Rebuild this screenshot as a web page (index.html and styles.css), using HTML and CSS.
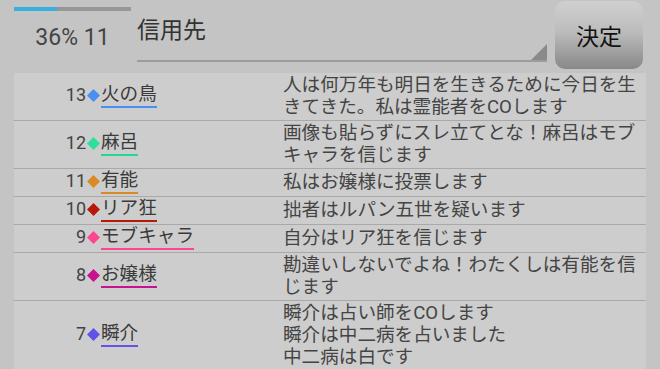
FILE: index.html
```html
<!DOCTYPE html>
<html lang="ja">
<head>
    <meta charset="UTF-8">
    <meta name="viewport" content="width=device-width, initial-scale=1.0">
    <title>投票</title>
    <link rel="stylesheet" href="styles.css">
</head>
<body>
    <div class="top">
        <div class="meter">
            <div class="bar"><div class="bar-fill"></div></div>
            <div class="stats">36% 11</div>
        </div>
        <div class="spinner">
            <span class="spinner-label">信用先</span>
            <svg class="spinner-arrow" width="16" height="16" viewBox="0 0 16 16"><polygon points="16,0 16,16 0,16" fill="#8a8a8a"/></svg>
        </div>
        <button class="btn">決定</button>
    </div>

    <div class="list">
        <div class="row">
            <div class="who">
                <span class="num">13</span>
                <svg class="mark" width="13" height="13" viewBox="0 0 13 13"><polygon points="6.5,0 13,6.5 6.5,13 0,6.5" fill="#4a8ff0"/></svg>
                <span class="name name-blue">火の鳥</span>
            </div>
            <div class="msg">人は何万年も明日を生きるために今日を生<br>きてきた。私は霊能者をCOします</div>
        </div>
        <div class="row">
            <div class="who">
                <span class="num">12</span>
                <svg class="mark" width="13" height="13" viewBox="0 0 13 13"><polygon points="6.5,0 13,6.5 6.5,13 0,6.5" fill="#2ee09c"/></svg>
                <span class="name name-mint">麻呂</span>
            </div>
            <div class="msg">画像も貼らずにスレ立てとな！麻呂はモブ<br>キャラを信じます</div>
        </div>
        <div class="row">
            <div class="who">
                <span class="num">11</span>
                <svg class="mark" width="13" height="13" viewBox="0 0 13 13"><polygon points="6.5,0 13,6.5 6.5,13 0,6.5" fill="#d98a22"/></svg>
                <span class="name name-orange">有能</span>
            </div>
            <div class="msg">私はお嬢様に投票します</div>
        </div>
        <div class="row">
            <div class="who">
                <span class="num">10</span>
                <svg class="mark" width="13" height="13" viewBox="0 0 13 13"><polygon points="6.5,0 13,6.5 6.5,13 0,6.5" fill="#b8180a"/></svg>
                <span class="name name-red">リア狂</span>
            </div>
            <div class="msg">拙者はルパン五世を疑います</div>
        </div>
        <div class="row">
            <div class="who">
                <span class="num">9</span>
                <svg class="mark" width="13" height="13" viewBox="0 0 13 13"><polygon points="6.5,0 13,6.5 6.5,13 0,6.5" fill="#ff4590"/></svg>
                <span class="name name-pink">モブキャラ</span>
            </div>
            <div class="msg">自分はリア狂を信じます</div>
        </div>
        <div class="row">
            <div class="who">
                <span class="num">8</span>
                <svg class="mark" width="13" height="13" viewBox="0 0 13 13"><polygon points="6.5,0 13,6.5 6.5,13 0,6.5" fill="#c8128e"/></svg>
                <span class="name name-magenta">お嬢様</span>
            </div>
            <div class="msg">勘違いしないでよね！わたくしは有能を信<br>じます</div>
        </div>
        <div class="row">
            <div class="who">
                <span class="num">7</span>
                <svg class="mark" width="13" height="13" viewBox="0 0 13 13"><polygon points="6.5,0 13,6.5 6.5,13 0,6.5" fill="#6252e8"/></svg>
                <span class="name name-violet">瞬介</span>
            </div>
            <div class="msg">瞬介は占い師をCOします<br>瞬介は中二病を占いました<br>中二病は白です</div>
        </div>
    </div>
</body>
</html>
```

FILE: styles.css
```css
* {
    margin: 0;
    padding: 0;
    box-sizing: border-box;
}

body {
    font-family: Roboto, "Noto Sans CJK JP", sans-serif;
    background-color: #c4c4c4;
    color: #444;
    width: 660px;
    height: 369px;
    overflow: hidden;
}

/* header */
.top {
    display: flex;
    align-items: flex-start;
    height: 73px;
    padding: 0 17px 0 14px;
}

.meter {
    width: 117px;
}

.bar {
    margin-top: 7px;
    height: 4px;
    background-color: #979797;
}

.bar-fill {
    width: 37%;
    height: 100%;
    background-color: #3aaee0;
}

.stats {
    margin-top: 13px;
    text-align: center;
    font-size: 23px;
    line-height: 27px;
    color: #444;
}

.spinner {
    display: flex;
    justify-content: space-between;
    margin-left: 6px;
    width: 410px;
    height: 62px;
    border-bottom: 2px solid #9c9c9c;
}

.spinner-label {
    margin-top: 16px;
    font-size: 23px;
    line-height: 30px;
    color: #333;
}

.spinner-arrow {
    align-self: flex-end;
}

.btn {
    margin: 1px 0 0 8px;
    width: 88px;
    height: 68px;
    border: none;
    border-radius: 10px;
    background: linear-gradient(#d0d0d0 0%, #bcbcbc 45%, #888 100%);
    font-family: inherit;
    font-size: 23px;
    color: #111;
}

/* list */
.list {
    margin: 0 14px;
    background-color: #cdcdcd;
}

.row {
    display: flex;
    align-items: center;
    padding: 1px 0 2px;
    border-bottom: 1px solid #a9a9a9;
}

.who {
    display: flex;
    align-items: flex-start;
    width: 269px;
    flex-shrink: 0;
}

.num {
    width: 72px;
    text-align: right;
    font-size: 18px;
    line-height: 21px;
    color: #444;
}

.mark {
    margin: 5px 1px 0 1px;
}

.name {
    margin-left: 0;
    font-size: 18.6px;
    line-height: 20px;
    padding-bottom: 2px;
    border-bottom: 2px solid;
    color: #3a3a3a;
}

.name-blue { border-color: #4a8ff0; }
.name-mint { border-color: #22d894; }
.name-orange { border-color: #d98a22; }
.name-red { border-color: #b8180a; }
.name-pink { border-color: #ff4590; }
.name-magenta { border-color: #c8128e; }
.name-violet { border-color: #6252e8; }

.msg {
    flex: 1;
    font-size: 18.6px;
    line-height: 22px;
    color: #444;
    white-space: nowrap;
}
```
